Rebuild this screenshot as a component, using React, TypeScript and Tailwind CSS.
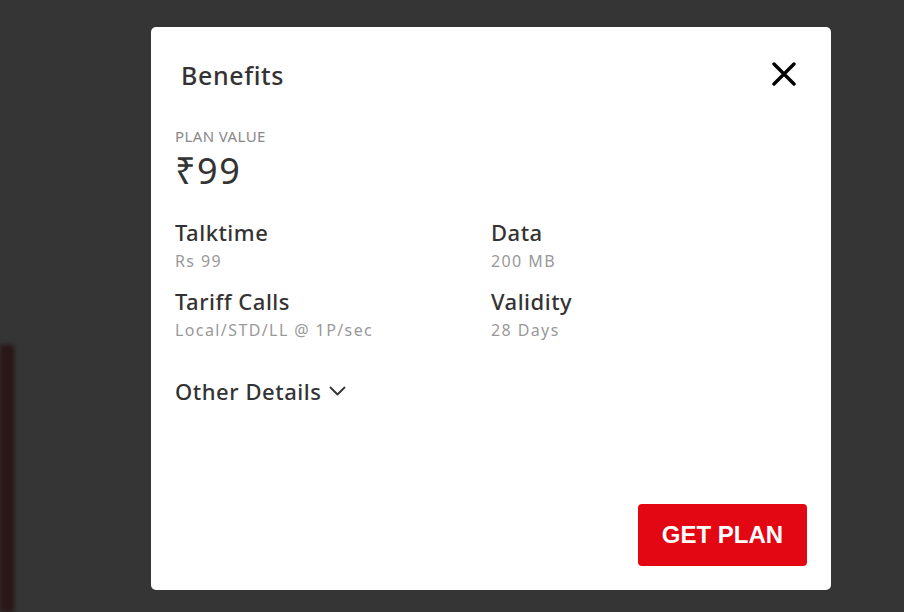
const benefits = [
  { label: 'Talktime', value: 'Rs 99' },
  { label: 'Data', value: '200 MB' },
  { label: 'Tariff Calls', value: 'Local/STD/LL @ 1P/sec' },
  { label: 'Validity', value: '28 Days' },
]

function CloseIcon() {
  return (
    <svg width="24" height="24" viewBox="0 0 24 24" fill="none" stroke="#000" strokeWidth="3.4" strokeLinecap="round">
      <path d="M2 2L22 22M22 2L2 22" />
    </svg>
  )
}

function Chevron() {
  return (
    <svg width="17" height="10" viewBox="0 0 17 10" fill="none" stroke="#333" strokeWidth="1.8" strokeLinecap="round" strokeLinejoin="round">
      <path d="M1.5 1.5L8.5 8.5L15.5 1.5" />
    </svg>
  )
}

export default function App() {
  return (
    <div
      className="relative w-full h-[612px] bg-[#353535] overflow-hidden"
      style={{ fontFamily: '"Noto Sans", "Open Sans", sans-serif' }}
    >
      {/* dark red strip at the left edge, part of the page behind the overlay */}
      <div className="absolute left-0 top-[345px] w-[14px] h-[267px] bg-[#2a1616] blur-[2px]" />

      <div className="pt-[27px] pl-[151px]">
        {/* Modal */}
        <div className="w-[680px] h-[563px] bg-white rounded-[5px] flex flex-col">
          {/* Header */}
          <div className="flex items-start justify-between pl-[30px] pr-[35px] pt-[33px]">
            <h2 className="text-[25px] leading-[30px] text-[#333] font-medium tracking-[0.6px]">Benefits</h2>
            <div className="mt-[2px]">
              <CloseIcon />
            </div>
          </div>

          {/* Body */}
          <div className="px-[24px] pt-[36px] flex-1">
            <div className="text-[15px] leading-[20px] text-[#888] tracking-[0.4px]">PLAN VALUE</div>
            <div className="text-[36px] leading-[40px] text-[#333] mt-[5px] tracking-[1.5px]">₹99</div>

            <div className="grid grid-cols-2 gap-y-[15px] mt-[27px]">
              {benefits.map((b) => (
                <div key={b.label}>
                  <div className="text-[22px] leading-[28px] text-[#333] font-medium tracking-[0.5px]">{b.label}</div>
                  <div className="text-[16px] leading-[22px] text-[#999] mt-[4px] tracking-[1.4px]">{b.value}</div>
                </div>
              ))}
            </div>

            <button className="flex items-center gap-[7px] mt-[36px] text-[22px] leading-[28px] text-[#333] font-medium tracking-[0.55px]">
              Other Details
              <Chevron />
            </button>
          </div>

          {/* Footer */}
          <div className="flex justify-end pr-[24px] pb-[24px]">
            <button
              className="w-[169px] h-[62px] bg-[#e30613] rounded-[4px] text-white text-[24px] font-bold"
              style={{ fontFamily: '"Liberation Sans", Arial, sans-serif' }}
            >
              GET PLAN
            </button>
          </div>
        </div>
      </div>
    </div>
  )
}
